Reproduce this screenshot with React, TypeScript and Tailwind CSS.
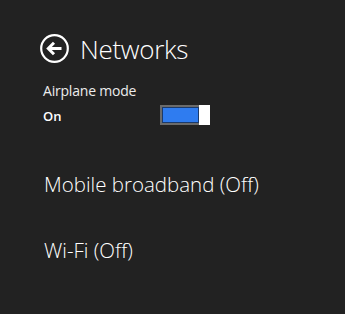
export default function App() {
  return (
    <div
      className="w-[345px] h-[314px] bg-[#222222] text-white overflow-hidden"
      style={{ fontFamily: '"Open Sans", "Noto Sans", sans-serif' }}
    >
      <div className="pl-[40px] pt-[34px]">
        <div className="flex items-center gap-[11px]">
          <svg width="29" height="29" viewBox="0 0 29 29" fill="none" stroke="white">
            <circle cx="14.5" cy="14.5" r="13.3" strokeWidth="2.2" />
            <path d="M21.5 14.5H8.5M14 8.8L8.3 14.5L14 20.2" strokeWidth="3" />
          </svg>
          <span className="text-[26px] font-light leading-none tracking-[-0.3px]">Networks</span>
        </div>

        <div className="mt-[21px] pl-[3px]">
          <div className="text-[14px] leading-none text-[#ececec] tracking-[-0.2px]">Airplane mode</div>
          <div className="flex items-center mt-[7px]">
            <span className="w-[117px] text-[13px] font-semibold leading-none mt-[3px]">On</span>
            <div className="flex h-[20px] w-[50px] border-2 border-[#6b6b6b] bg-[#6b6b6b]">
              <div className="flex-1 border border-[#1c3a6a] bg-[#2f7cf0]" />
              <div className="w-[11px] bg-white -my-[2px] -mr-[2px] h-[20px]" />
            </div>
          </div>
        </div>

        <div className="mt-[49px] pl-[4px] text-[20.5px] font-light leading-none">
          Mobile broadband (Off)
        </div>
        <div className="mt-[45px] pl-[4px] text-[20.5px] font-light leading-none">
          Wi-Fi (Off)
        </div>
      </div>
    </div>
  );
}
